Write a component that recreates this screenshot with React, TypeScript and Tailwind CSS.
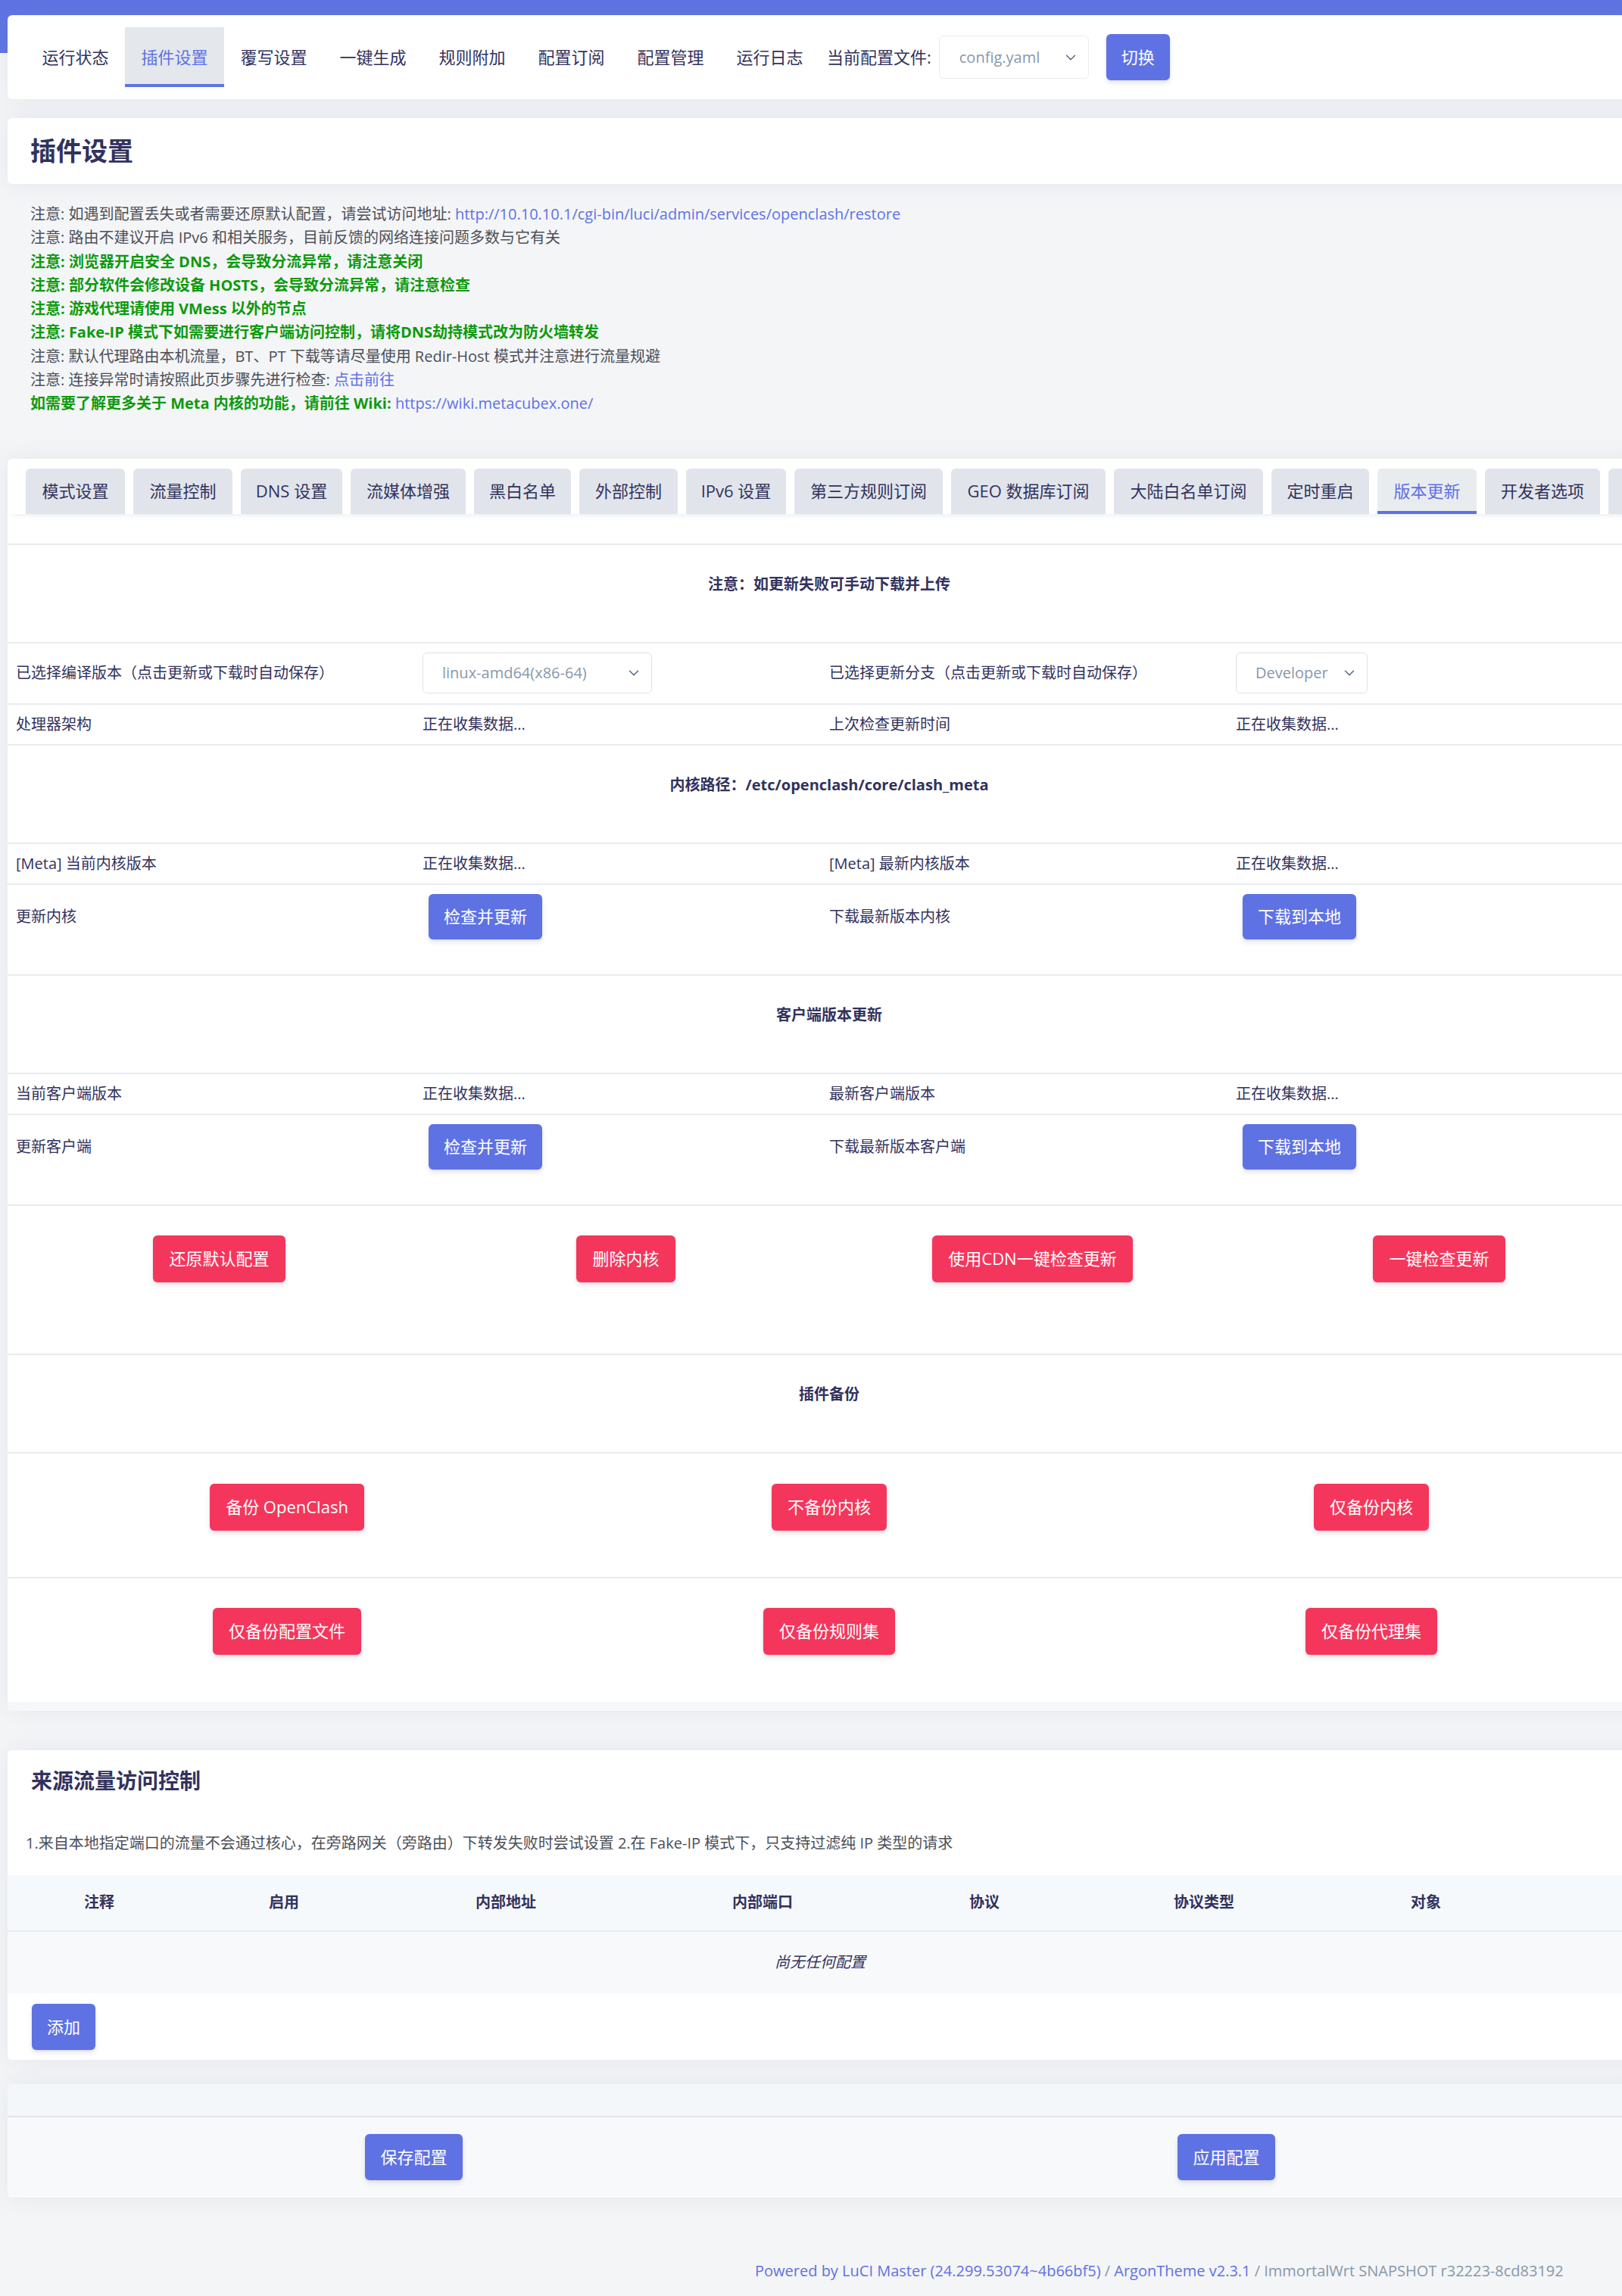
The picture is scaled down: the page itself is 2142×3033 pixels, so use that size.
import React from 'react';
import { ChevronDown } from 'lucide-react';

const navItems = ['运行状态', '插件设置', '覆写设置', '一键生成', '规则附加', '配置订阅', '配置管理', '运行日志'];

// tab widths measured off the original page; the last one is only a sliver at the edge
const tabs: { label: string; w: string }[] = [
  { label: '模式设置', w: 'w-[131px]' },
  { label: '流量控制', w: 'w-[131px]' },
  { label: 'DNS 设置', w: 'w-[134px]' },
  { label: '流媒体增强', w: 'w-[152px]' },
  { label: '黑白名单', w: 'w-[128px]' },
  { label: '外部控制', w: 'w-[130px]' },
  { label: 'IPv6 设置', w: 'w-[132px]' },
  { label: '第三方规则订阅', w: 'w-[196px]' },
  { label: 'GEO 数据库订阅', w: 'w-[204px]' },
  { label: '大陆白名单订阅', w: 'w-[197px]' },
  { label: '定时重启', w: 'w-[129px]' },
  { label: '版本更新', w: 'w-[131px]' },
  { label: '开发者选项', w: 'w-[152px]' },
  { label: '', w: 'w-[60px]' },
];

const notes: { text: string; green?: boolean; link?: string; linkText?: string }[] = [
  { text: '注意: 如遇到配置丢失或者需要还原默认配置，请尝试访问地址: ', link: 'http://10.10.10.1/cgi-bin/luci/admin/services/openclash/restore' },
  { text: '注意: 路由不建议开启 IPv6 和相关服务，目前反馈的网络连接问题多数与它有关' },
  { text: '注意: 浏览器开启安全 DNS，会导致分流异常，请注意关闭', green: true },
  { text: '注意: 部分软件会修改设备 HOSTS，会导致分流异常，请注意检查', green: true },
  { text: '注意: 游戏代理请使用 VMess 以外的节点', green: true },
  { text: '注意: Fake-IP 模式下如需要进行客户端访问控制，请将DNS劫持模式改为防火墙转发', green: true },
  { text: '注意: 默认代理路由本机流量，BT、PT 下载等请尽量使用 Redir-Host 模式并注意进行流量规避' },
  { text: '注意: 连接异常时请按照此页步骤先进行检查: ', link: '#', linkText: '点击前往' },
  { text: '如需要了解更多关于 Meta 内核的功能，请前往 Wiki: ', green: true, link: 'https://wiki.metacubex.one/' },
];

const BlueBtn = ({ label, h = 'h-[61px]' }: { label: string; h?: string }) => (
  <button className={`${h} px-[20px] rounded-[6px] bg-[#5e72e4] text-white text-[22px] shadow-[0_4px_6px_rgba(50,50,93,0.11),0_1px_3px_rgba(0,0,0,0.08)]`}>
    {label}
  </button>
);

const RedBtn = ({ label }: { label: string }) => (
  <button className="h-[62px] px-[21px] rounded-[6px] bg-[#f5365c] text-white text-[22px] shadow-[0_4px_6px_rgba(50,50,93,0.11),0_1px_3px_rgba(0,0,0,0.08)]">
    {label}
  </button>
);

const Select = ({ value, w }: { value: string; w: string }) => (
  <div className={`${w} h-[54px] border border-[#dee2e6] rounded-[6px] flex items-center justify-between pl-[25px] pr-[12px] text-[20px] text-[#8898aa] bg-white`}>
    <span>{value}</span>
    <ChevronDown size={22} strokeWidth={1.5} className="text-[#525f7f]" />
  </div>
);

const TitleRow = ({ label }: { label: string }) => (
  <div className="h-[130px] border-t-2 border-[#e9ecef] text-center pt-[40px] text-[20px] font-bold text-[#32325d] leading-[24px]">
    {label}
  </div>
);

const InfoRow = ({ cells, h = 'h-[54px]' }: { cells: React.ReactNode[]; h?: string }) => (
  <div className={`${h} border-t-2 border-[#e9ecef] px-[11px] grid grid-cols-4 items-center text-[20px] text-[#32325d]`}>
    {cells.map((c, i) => (
      <div key={i}>{c}</div>
    ))}
  </div>
);

const ButtonRow = ({ cells }: { cells: React.ReactNode[] }) => (
  <div className="h-[120px] border-t-2 border-[#e9ecef] px-[11px] pt-[12px] grid grid-cols-4 items-start text-[20px] text-[#32325d]">
    {cells.map((c, i) => (
      <div key={i} className="h-[60px] flex items-center">{c}</div>
    ))}
  </div>
);

export default function App() {
  return (
    <div className="w-full min-h-[3033px] overflow-hidden bg-[#f4f5f7] font-['Open_Sans','Noto_Sans_CJK_SC',sans-serif] text-[#525f7f]">
      <div className="w-[2190px] relative">
        <div className="h-[70px] bg-[#5e72e4]" />

        {/* top nav */}
        <div className="-mt-[50px] ml-[10px] mr-[10px] h-[111px] bg-white rounded-[6px] shadow-[0_0_32px_0_rgba(136,152,170,0.15)] pl-[24px] flex items-center">
          <div className="flex h-[79px] items-stretch">
            {navItems.map((n) => (
              <div
                key={n}
                className={
                  n === '插件设置'
                    ? 'px-[21px] flex items-center text-[22px] text-[#5e72e4] bg-[#e4e7eb] border-b-4 border-[#5e72e4] pt-[4px] w-[131px] justify-center'
                    : 'px-[21px] flex items-center text-[22px] text-[#32325d] w-[131px] justify-center'
                }
              >
                {n}
              </div>
            ))}
          </div>
          <span className="ml-[10px] text-[22px] text-[#32325d]">当前配置文件:</span>
          <div className="ml-[10px] w-[198px] h-[57px] border border-[#e9ecef] rounded-[6px] flex items-center justify-between pl-[26px] pr-[12px] text-[20px] text-[#8898aa]">
            <span>config.yaml</span>
            <ChevronDown size={22} strokeWidth={1.5} className="text-[#525f7f]" />
          </div>
          <div className="ml-[23px]">
            <BlueBtn label="切换" />
          </div>
        </div>

        {/* title */}
        <div className="mt-[25px] mx-[10px] h-[87px] bg-white rounded-[6px] shadow-[0_0_32px_0_rgba(136,152,170,0.15)] pl-[30px] flex items-center">
          <h2 className="text-[34px] font-bold text-[#32325d]">插件设置</h2>
        </div>

        {/* notes */}
        <div className="mt-[24px] pl-[40px] text-[20px] leading-[31.3px]">
          {notes.map((n, i) => (
            <div key={i} className={n.green ? 'font-bold text-[#0d9a0d]' : 'text-[#4b4f58]'}>
              {n.text}
              {n.link && (
                <a className="text-[#5e72e4] font-normal">{n.linkText ?? n.link}</a>
              )}
            </div>
          ))}
        </div>

        {/* tab card */}
        <div className="mt-[57px] mx-[10px] bg-white rounded-[6px] shadow-[0_0_32px_0_rgba(136,152,170,0.15)]">
          <div className="pt-[13px] pl-[24px] flex gap-[11px] h-[73px] shadow-[0_6px_8px_-6px_rgba(136,152,170,0.25)]">
            {tabs.map((t, i) => (
              <div
                key={i}
                className={
                  t.label === '版本更新'
                    ? `${t.w} shrink-0 h-[60px] rounded-t-[6px] bg-[#e9ecef] border-b-4 border-[#5e72e4] text-[#5e72e4] text-[22px] flex items-center justify-center whitespace-nowrap pt-[4px]`
                    : `${t.w} shrink-0 h-[60px] rounded-t-[6px] bg-[#e1e5eb] text-[#32325d] text-[22px] flex items-center justify-center whitespace-nowrap`
                }
              >
                {t.label}
              </div>
            ))}
          </div>

          <div className="mt-[39px]">
            <TitleRow label="注意：如更新失败可手动下载并上传" />
            <InfoRow
              h="h-[81px]"
              cells={[
                '已选择编译版本（点击更新或下载时自动保存）',
                <Select value="linux-amd64(x86-64)" w="w-[303px]" />,
                '已选择更新分支（点击更新或下载时自动保存）',
                <Select value="Developer" w="w-[174px]" />,
              ]}
            />
            <InfoRow cells={['处理器架构', '正在收集数据...', '上次检查更新时间', '正在收集数据...']} />
            <TitleRow label="内核路径：/etc/openclash/core/clash_meta" />
            <InfoRow cells={['[Meta] 当前内核版本', '正在收集数据...', '[Meta] 最新内核版本', '正在收集数据...']} />
            <ButtonRow
              cells={[
                '更新内核',
                <span className="ml-[8px]"><BlueBtn label="检查并更新" h="h-[60px]" /></span>,
                '下载最新版本内核',
                <span className="ml-[9px]"><BlueBtn label="下载到本地" h="h-[60px]" /></span>,
              ]}
            />
            <TitleRow label="客户端版本更新" />
            <InfoRow cells={['当前客户端版本', '正在收集数据...', '最新客户端版本', '正在收集数据...']} />
            <ButtonRow
              cells={[
                '更新客户端',
                <span className="ml-[8px]"><BlueBtn label="检查并更新" h="h-[60px]" /></span>,
                '下载最新版本客户端',
                <span className="ml-[9px]"><BlueBtn label="下载到本地" h="h-[60px]" /></span>,
              ]}
            />

            <div className="h-[197px] border-t-2 border-[#e9ecef] px-[11px] pt-[39px] grid grid-cols-4">
              {['还原默认配置', '删除内核', '使用CDN一键检查更新', '一键检查更新'].map((b) => (
                <div key={b} className="flex justify-center items-start">
                  <RedBtn label={b} />
                </div>
              ))}
            </div>

            <TitleRow label="插件备份" />

            <div className="h-[165px] border-t-2 border-[#e9ecef] px-[11px] pt-[40px] grid grid-cols-3">
              {['备份 OpenClash', '不备份内核', '仅备份内核'].map((b) => (
                <div key={b} className="flex justify-center items-start">
                  <RedBtn label={b} />
                </div>
              ))}
            </div>
            <div className="h-[165px] border-t-2 border-[#e9ecef] px-[11px] pt-[39px] grid grid-cols-3">
              {['仅备份配置文件', '仅备份规则集', '仅备份代理集'].map((b) => (
                <div key={b} className="flex justify-center items-start">
                  <RedBtn label={b} />
                </div>
              ))}
            </div>
          </div>
          <div className="h-[12px] bg-[#f6f7f9] rounded-b-[6px]" />
        </div>

        {/* source traffic control */}
        <div className="mt-[52px] mx-[10px] h-[409px] bg-white rounded-[6px] shadow-[0_0_32px_0_rgba(136,152,170,0.15)]">
          <h3 className="pt-[26px] pl-[31px] text-[28px] font-bold text-[#32325d] leading-[28px]">来源流量访问控制</h3>
          <p className="mt-[54px] pl-[24px] text-[20px] text-[#4b4f58] leading-[30px]">
            1.来自本地指定端口的流量不会通过核心，在旁路网关（旁路由）下转发失败时尝试设置 2.在 Fake-IP 模式下，只支持过滤纯 IP 类型的请求
          </p>
          <div className="mt-[27px] h-[75px] bg-[#f6f9fc] border-b-2 border-[#e9ecef] grid grid-cols-[242px_246px_340px_338px_248px_332px_254px_1fr] items-center text-[20px] font-bold text-[#32325d]">
            {['注释', '启用', '内部地址', '内部端口', '协议', '协议类型', '对象', ''].map((h, i) => (
              <div key={i} className="text-center">{h}</div>
            ))}
          </div>
          <div className="h-[81px] bg-[#f8f9fa] flex items-center pl-[1013px] text-[20px] italic text-[#32325d]">
            尚无任何配置
          </div>
          <div className="mt-[14px] pl-[32px]">
            <BlueBtn label="添加" />
          </div>
        </div>

        {/* save / apply */}
        <div className="mt-[32px] mx-[10px] h-[150px] rounded-[6px] shadow-[0_0_32px_0_rgba(136,152,170,0.15)] overflow-hidden">
          <div className="h-[44px] bg-[#f4f7fa] border-b-2 border-[#e1e4e8]" />
          <div className="h-[106px] bg-[#f8f9fa] pt-[22px] grid grid-cols-[1073px_1073px]">
            <div className="flex justify-center items-start"><BlueBtn label="保存配置" /></div>
            <div className="flex justify-center items-start"><BlueBtn label="应用配置" /></div>
          </div>
        </div>

        {/* footer */}
        <div className="mt-[83px] pl-[997px] text-[20px] whitespace-nowrap leading-[28px]">
          <span className="text-[#5e72e4]">Powered by LuCI Master (24.299.53074~4b66bf5)</span>
          <span className="text-[#8898aa]"> / </span>
          <span className="text-[#5e72e4]">ArgonTheme v2.3.1</span>
          <span className="text-[#8898aa]"> / ImmortalWrt SNAPSHOT r32223-8cd83192</span>
        </div>
      </div>
    </div>
  );
}
